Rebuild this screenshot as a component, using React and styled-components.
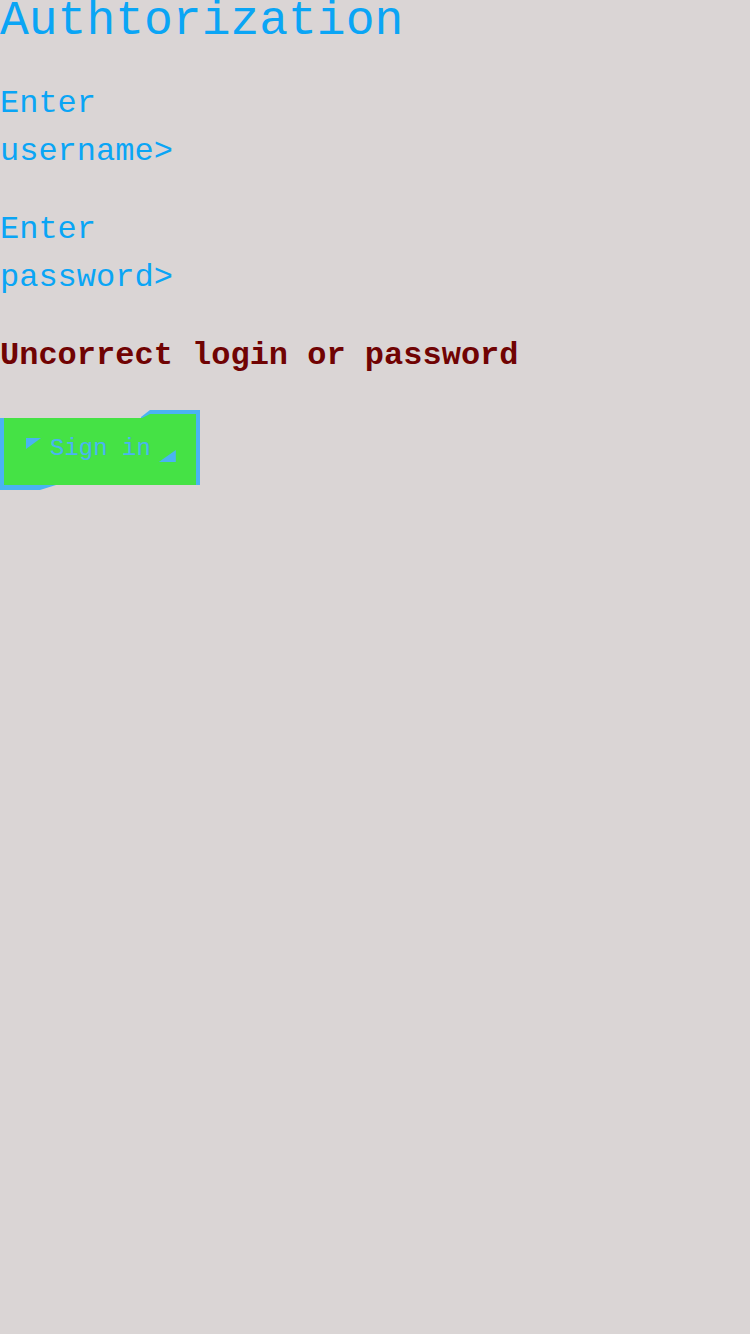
import React from 'react';
import styled, { createGlobalStyle } from 'styled-components';

// Базовые стили страницы

const GlobalStyle = createGlobalStyle`
  html, body {
    margin: 0;
    padding: 0;
    background: #dad5d5;
  }
  body {
    font-family: "Liberation Mono", "Courier New", monospace;
    min-height: 1334px;
  }
`;

const Page = styled.div`
  display: flex;
  flex-direction: column;
  align-items: flex-start;
  gap: 30px;
`;

const Title = styled.h1`
  margin: -3px 0 5px 0;
  font-size: 48px;
  line-height: 48px;
  font-weight: 400;
  color: #0aa5f5;
`;

const Field = styled.label`
  display: block;
  width: 180px;
  font-size: 32px;
  line-height: 48px;
  color: #0aa5f5;
`;

const ErrorText = styled.p`
  margin: 0;
  font-size: 32px;
  line-height: 48px;
  font-weight: 700;
  color: #700303;
`;

// Кнопка с синими уголками

const ButtonFrame = styled.div`
  position: relative;
  width: 200px;
  height: 80px;
`;

const CornerTop = styled.span`
  position: absolute;
  top: 0;
  right: 0;
  width: 62px;
  height: 75px;
  background: #4ab3f2;
  clip-path: polygon(3px 7px, 12px 0, 100% 0, 100% 100%, 0 100%);
`;

const CornerBottom = styled.span`
  position: absolute;
  left: 0;
  bottom: 0;
  width: 56px;
  height: 72px;
  background: #4ab3f2;
  clip-path: polygon(0 0, 100% 0, 100% calc(100% - 5px), 40px 100%, 0 100%);
`;

const SignInButton = styled.button`
  position: relative;
  display: flex;
  align-items: flex-start;
  box-sizing: border-box;
  width: 192px;
  height: 71px;
  margin: 4px 0 0 4px;
  padding: 0 0 0 22px;
  border: none;
  background: #45e245;
  color: #4ab3f2;
  font-family: "Liberation Mono", "Courier New", monospace;
  font-size: 24px;
  cursor: pointer;
  clip-path: polygon(0 4px, 138px 4px, 146px 0, 100% 0, 100% 100%, 0 100%);
`;

const Triangle = styled.span`
  display: block;
  flex-shrink: 0;
  width: ${(p) => (p.end ? 17 : 15)}px;
  height: ${(p) => (p.end ? 12 : 11)}px;
  background: #4ab3f2;
  margin: ${(p) => (p.end ? '36px 0 0 8px' : '24px 9px 0 0')};
  clip-path: ${(p) =>
    p.end
      ? 'polygon(100% 0, 100% 100%, 0 100%)'
      : 'polygon(0 0, 100% 0, 0 100%)'};
`;

const Label = styled.span`
  flex-shrink: 0;
  line-height: 24px;
  margin-top: 23px;
`;

const App = () => {
  return (
    <Page>
      <GlobalStyle />
      <Title>Authtorization</Title>
      <Field>Enter username&gt;</Field>
      <Field>Enter password&gt;</Field>
      <ErrorText>Uncorrect login or password</ErrorText>
      <ButtonFrame>
        <CornerTop />
        <CornerBottom />
        <SignInButton>
          <Triangle />
          <Label>Sign in</Label>
          <Triangle end />
        </SignInButton>
      </ButtonFrame>
    </Page>
  );
};

export default App;
